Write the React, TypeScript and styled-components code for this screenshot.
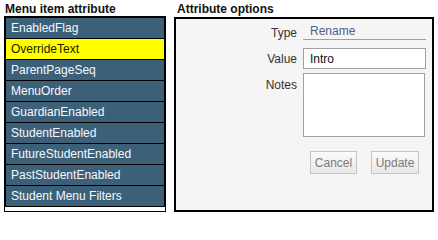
import React, { useState } from 'react'
import styled, { createGlobalStyle } from 'styled-components'

const GlobalStyle = createGlobalStyle`
  body {
    margin: 0;
    background: #fff;
    font-family: "Liberation Sans", Arial, sans-serif;
    font-size: 12px;
    color: #222;
  }
`

const Page = styled.div`
  display: flex;
  align-items: flex-start;
  gap: 8px;
  padding: 0 0 0 4px;
`

const Column = styled.div<{ width: number }>`
  width: ${({ width }) => width}px;
  display: flex;
  flex-direction: column;
`

const Heading = styled.div<{ indent?: number }>`
  font-weight: bold;
  font-size: 12px;
  line-height: 14px;
  height: 16px;
  padding-top: 2px;
  padding-left: ${({ indent }) => indent || 1}px;
  box-sizing: border-box;
  color: #111;
`

const List = styled.div`
  border: 1px solid #000;
  background: #fff;
  padding-bottom: 5px;
`

const Item = styled.div<{ selected?: boolean }>`
  height: 20px;
  line-height: 20px;
  border: 1px solid #000;
  margin-bottom: -1px;
  padding-left: 5px;
  background: ${({ selected }) => (selected ? '#ffff00' : '#3c6077')};
  color: ${({ selected }) => (selected ? '#1a1a00' : '#f4f8ff')};
  cursor: pointer;
  white-space: nowrap;
`

const Panel = styled.div`
  margin-top: 1px;
  height: 191px;
  border: 2px solid #000;
  background: #f5f5f5;
  padding: 0 6px 0 0;
  display: grid;
  grid-template-columns: 1fr 123px;
  grid-auto-rows: min-content;
  column-gap: 6px;
  align-content: start;
`

const Label = styled.div<{ top?: number }>`
  text-align: right;
  color: #333;
  padding-top: ${({ top }) => top || 0}px;
  line-height: 14px;
`

const Field = styled.div<{ top?: number }>`
  padding-top: ${({ top }) => top || 0}px;
`

const ReadOnly = styled.div`
  height: 21px;
  box-sizing: border-box;
  border-bottom: 1px solid #a0a0a0;
  padding: 5px 0 0 7px;
  line-height: 14px;
  color: #4e5f8c;
`

const TextInput = styled.input`
  height: 21px;
  box-sizing: border-box;
  width: 100%;
  margin: 0;
  border: 1px solid #a0a0a0;
  background: #fff;
  padding: 0 6px;
  font: inherit;
  color: #111;
  outline: none;
`

const TextArea = styled.textarea`
  display: block;
  height: 64px;
  box-sizing: border-box;
  width: 122px;
  margin: 0;
  border: 1px solid #a0a0a0;
  background: #fff;
  resize: none;
  font: inherit;
  outline: none;
`

const Actions = styled.div`
  grid-column: 2;
  display: flex;
  gap: 14px;
  padding: 14px 0 0 7px;
`

const Button = styled.button<{ width: number }>`
  width: ${({ width }) => width}px;
  height: 23px;
  border: 1px solid #c4c4c4;
  background: linear-gradient(#fafafa, #e8e8e8);
  color: #7a7a7a;
  font: inherit;
  padding: 0;
`

const items = [
  'EnabledFlag',
  'OverrideText',
  'ParentPageSeq',
  'MenuOrder',
  'GuardianEnabled',
  'StudentEnabled',
  'FutureStudentEnabled',
  'PastStudentEnabled',
  'Student Menu Filters',
]

export default function App() {
  const [selected, setSelected] = useState('OverrideText')
  const [value, setValue] = useState('Intro')

  return (
    <Page>
      <GlobalStyle />
      <Column width={162}>
        <Heading>Menu item attribute</Heading>
        <List>
          {items.map((name) => (
            <Item key={name} selected={name === selected} onClick={() => setSelected(name)}>
              {name}
            </Item>
          ))}
        </List>
      </Column>
      <Column width={260}>
        <Heading indent={3}>Attribute options</Heading>
        <Panel>
          <Label top={7}>Type</Label>
          <ReadOnly>Rename</ReadOnly>
          <Label top={12}>Value</Label>
          <Field top={8}>
            <TextInput value={value} onChange={(e) => setValue(e.target.value)} />
          </Field>
          <Label top={9}>Notes</Label>
          <Field top={4}>
            <TextArea />
          </Field>
          <Actions>
            <Button width={47} disabled>Cancel</Button>
            <Button width={48} disabled>Update</Button>
          </Actions>
        </Panel>
      </Column>
    </Page>
  )
}
